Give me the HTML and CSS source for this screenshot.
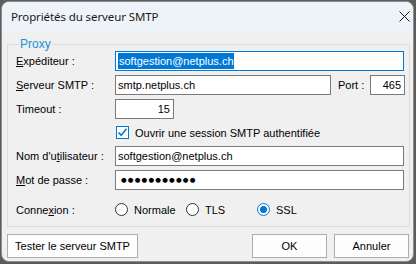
FILE: index.html
```html
<!DOCTYPE html>
<html lang="fr">

<head>
    <meta charset="UTF-8">
    <title>Propriétés du serveur SMTP</title>
    <link rel="stylesheet" href="styles.css">
</head>

<body>
    <div class="window">
        <div class="titlebar">
            <span class="title">Propriétés du serveur SMTP</span>
            <svg class="close" width="11" height="11" viewBox="0 0 11 11">
                <path d="M0.5 0.5 L10.5 10.5 M10.5 0.5 L0.5 10.5" stroke="#1a1a1a" stroke-width="1" fill="none"/>
            </svg>
        </div>

        <fieldset class="group">
            <legend>Proxy</legend>

            <div class="row">
                <label class="label"><u>E</u>xpéditeur :</label>
                <div class="field field-wide focused"><span class="selected">softgestion@netplus.ch</span></div>
            </div>

            <div class="row">
                <label class="label"><u>S</u>erveur SMTP :</label>
                <div class="field field-server">smtp.netplus.ch</div>
                <label class="label-port">Port :</label>
                <div class="field field-port num">465</div>
            </div>

            <div class="row">
                <label class="label">Timeout :</label>
                <div class="field field-timeout num">15</div>
            </div>

            <div class="row row-check">
                <span class="checkbox">
                    <svg width="11" height="11" viewBox="0 0 11 11">
                        <path d="M1.5 5.5 L4.2 8.3 L9.5 1.8" stroke="#0078d7" stroke-width="1.6" fill="none"/>
                    </svg>
                </span>
                <span class="check-label">Ouvrir une session SMTP authentifiée</span>
            </div>

            <div class="row row-user">
                <label class="label">Nom d'u<u>t</u>ilisateur :</label>
                <div class="field field-wide">softgestion@netplus.ch</div>
            </div>

            <div class="row">
                <label class="label"><u>M</u>ot de passe :</label>
                <div class="field field-wide password">●●●●●●●●●●●</div>
            </div>

            <div class="row row-radio">
                <label class="label">Conne<u>x</u>ion :</label>
                <div class="radio-item"><span class="radio"></span>Normale</div>
                <div class="radio-item"><span class="radio"></span>TLS</div>
                <div class="radio-item"><span class="radio checked"></span>SSL</div>
            </div>
        </fieldset>

        <div class="buttons">
            <button class="btn btn-test">Tester le serveur SMTP</button>
            <span class="spacer"></span>
            <button class="btn">OK</button>
            <button class="btn">Annuler</button>
        </div>
    </div>
</body>

</html>
```

FILE: styles.css
```css
* {
    box-sizing: border-box;
    margin: 0;
    padding: 0;
}

body {
    background-color: #5c5c5c;
    font-family: "Liberation Sans", Arial, sans-serif;
    font-size: 11px;
    color: #000;
    width: 416px;
    height: 264px;
    overflow: hidden;
}

.window {
    margin: 1px 0 0 1px;
    width: 413px;
    height: 261px;
    border: 1px solid #8e8e8e;
    border-radius: 8px;
    background-color: #f0f0f0;
    overflow: hidden;
    display: flex;
    flex-direction: column;
}

.titlebar {
    height: 29px;
    background-color: #eef3f9;
    display: flex;
    align-items: center;
    justify-content: space-between;
    padding: 0 3px 0 9px;
}

.title {
    font-family: "Noto Sans", sans-serif;
    font-size: 11.5px;
    letter-spacing: -0.1px;
    color: #1a1a1a;
}

.group {
    margin: 6px 4px 0 5px;
    border: 1px solid #dcdcdc;
    padding: 0 4px 10px 8px;
}

.group legend {
    margin-left: 3px;
    padding: 0 1px;
    font-size: 12px;
    line-height: 14px;
    color: #1a8fdc;
}

.row {
    display: flex;
    align-items: center;
    height: 20px;
    margin-bottom: 4px;
}

.label {
    width: 99px;
    flex-shrink: 0;
}

.field {
    height: 20px;
    border: 1px solid #7a7a7a;
    background-color: #fff;
    padding: 0 3px 0 2px;
    line-height: 18px;
    white-space: nowrap;
    overflow: hidden;
}

.field-wide {
    width: 289px;
}

.focused {
    border-color: #0078d7;
}

.selected {
    background-color: #0078d7;
    color: #fff;
    display: inline-block;
    line-height: 16px;
    padding-left: 1px;
}

.field-server {
    width: 216px;
}

.label-port {
    margin-left: 7px;
    width: 32px;
}

.field-port {
    width: 35px;
}

.field-timeout {
    width: 59px;
}

.num {
    text-align: right;
}

.row-check {
    height: 13px;
    margin-top: 7px;
    margin-bottom: 7px;
    padding-left: 100px;
}

.checkbox {
    width: 13px;
    height: 13px;
    border: 1px solid #0078d7;
    background-color: #fff;
    display: flex;
    align-items: center;
    justify-content: center;
    margin-right: 6px;
}

.password {
    font-family: "DejaVu Sans", sans-serif;
    font-size: 6.5px;
    letter-spacing: 1.2px;
    padding-left: 5px;
}

.row-radio {
    height: 13px;
    margin-top: 13px;
    margin-bottom: 0;
}

.radio-item {
    width: 71px;
    display: flex;
    align-items: center;
}

.radio {
    width: 13px;
    height: 13px;
    border: 1px solid #333;
    border-radius: 50%;
    background-color: #fff;
    margin-right: 6px;
    display: flex;
    align-items: center;
    justify-content: center;
}

.radio.checked {
    border-color: #0078d7;
}

.radio.checked::after {
    content: "";
    width: 7px;
    height: 7px;
    border-radius: 50%;
    background-color: #0078d7;
}

.buttons {
    display: flex;
    margin: 7px 4px 0 5px;
    gap: 7px;
}

.spacer {
    flex-grow: 1;
}

.btn {
    width: 75px;
    height: 24px;
    border: 1px solid #adadad;
    background-color: #fdfdfd;
    font-family: "Liberation Sans", Arial, sans-serif;
    font-size: 11px;
    color: #000;
}

.btn-test {
    width: 131px;
}
```
